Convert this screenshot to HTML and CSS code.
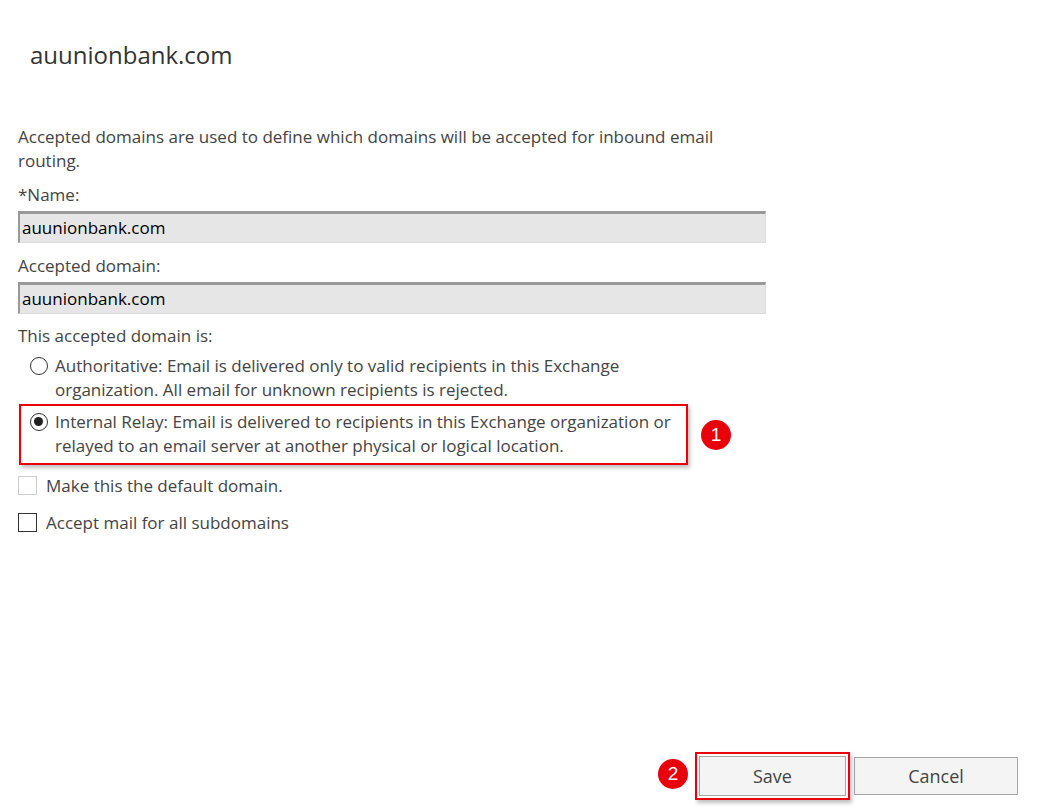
FILE: index.html
```html
<!DOCTYPE html>
<html>
<head>
<meta charset="utf-8">
<link rel="stylesheet" href="styles.css">
</head>
<body>
<div class="page">
  <h1 class="title">auunionbank.com</h1>
  <p class="desc">Accepted domains are used to define which domains will be accepted for inbound email routing.</p>
  <label class="field-label">*Name:</label>
  <div class="input">auunionbank.com</div>
  <label class="field-label">Accepted domain:</label>
  <div class="input">auunionbank.com</div>
  <label class="field-label group-label">This accepted domain is:</label>
  <div class="radio-row">
    <span class="radio"></span>
    <span class="radio-text">Authoritative: Email is delivered only to valid recipients in this Exchange organization. All email for unknown recipients is rejected.</span>
  </div>
  <div class="highlight-wrap">
    <div class="radio-row highlight">
      <span class="radio checked"></span>
      <span class="radio-text">Internal Relay: Email is delivered to recipients in this Exchange organization or relayed to an email server at another physical or logical location.</span>
    </div>
    <span class="badge badge-1">1</span>
  </div>
  <div class="check-row disabled">
    <span class="checkbox"></span>
    <span class="check-text">Make this the default domain.</span>
  </div>
  <div class="check-row">
    <span class="checkbox"></span>
    <span class="check-text">Accept mail for all subdomains</span>
  </div>
  <div class="footer">
    <div class="save-wrap">
      <span class="badge badge-2">2</span>
      <div class="save-box"><button class="btn">Save</button></div>
    </div>
    <button class="btn cancel">Cancel</button>
  </div>
</div>
</body>
</html>
```

FILE: styles.css
```css
html, body {
  margin: 0;
  padding: 0;
  background: #fff;
}
body {
  font-family: "Segoe UI", "Open Sans", "Noto Sans", sans-serif;
  color: #444;
}
.page {
  height: 812px;
  box-sizing: border-box;
  padding: 0 0 0 18px;
  display: flex;
  flex-direction: column;
  width: 1047px;
}
.title {
  margin: 39px 0 0 12px;
  font-size: 24px;
  font-weight: 400;
  line-height: 32px;
  color: #333;
}
.desc {
  width: 720px;
  margin: 54px 0 0 0;
  font-size: 17px;
  line-height: 24px;
}
.field-label {
  display: block;
  font-size: 17px;
  line-height: 24px;
  margin-top: 11px;
}
.desc + .field-label {
  margin-top: 10px;
}
.field-label.group-label {
  margin-top: 10px;
}
.input {
  width: 748px;
  height: 32px;
  box-sizing: border-box;
  margin-top: 4px;
  background: #e6e6e6;
  border-top: 3px solid #999;
  border-left: 2px solid #999;
  border-right: 1px solid #ddd;
  border-bottom: 1px solid #ddd;
  color: #000;
  font-size: 17px;
  line-height: 27px;
  padding-left: 2px;
}
.radio-row {
  display: flex;
  align-items: flex-start;
  padding-left: 12px;
  margin-top: 6px;
}
.radio {
  flex: none;
  width: 18px;
  height: 18px;
  box-sizing: border-box;
  border: 1.5px solid #333;
  border-radius: 50%;
  margin-top: 3px;
  margin-right: 7px;
  position: relative;
  background: #fff;
}
.radio.checked::after {
  content: "";
  position: absolute;
  left: 3px;
  top: 3px;
  width: 9px;
  height: 9px;
  border-radius: 50%;
  background: #222;
}
.radio-text {
  width: 625px;
  font-size: 17px;
  line-height: 24px;
}
.highlight-wrap {
  position: relative;
  margin-top: 2px;
  width: 670px;
}
.highlight-wrap .radio-row {
  margin: 0 0 0 1px;
  width: 669px;
  box-sizing: border-box;
  border: 2px solid #e8000b;
  padding: 4px 0 5px 9px;
  box-shadow: 2px 3px 4px rgba(0,0,0,0.25);
}
.badge {
  position: absolute;
  width: 30px;
  height: 30px;
  border-radius: 50%;
  background: #e8000b;
  color: #fff;
  font-family: "Liberation Sans", Arial, sans-serif;
  font-size: 19px;
  line-height: 30px;
  text-align: center;
}
.badge-1 {
  left: 683px;
  top: 16px;
}
.check-row {
  display: flex;
  align-items: center;
  margin-top: 11px;
  height: 19px;
}
.check-row + .check-row {
  margin-top: 18px;
}
.checkbox {
  width: 19px;
  height: 19px;
  box-sizing: border-box;
  border: 1.5px solid #333;
  margin-right: 9px;
  background: #fff;
}
.check-row.disabled .checkbox {
  border-color: #ccc;
}
.check-text {
  font-size: 17px;
  line-height: 24px;
}
.footer {
  margin-top: auto;
  margin-bottom: 12px;
  display: flex;
  justify-content: flex-end;
  align-items: center;
  padding-right: 29px;
}
.save-wrap {
  position: relative;
}
.save-box {
  border: 2px solid #e8000b;
  padding: 2px;
  box-shadow: 2px 3px 4px rgba(0,0,0,0.25);
}
.badge-2 {
  left: -37px;
  top: 7px;
}
.btn {
  display: block;
  width: 147px;
  height: 40px;
  box-sizing: border-box;
  background: #f4f4f4;
  border: 1px solid #a6a6a6;
  font-family: "Segoe UI", "Open Sans", "Noto Sans", sans-serif;
  font-size: 18px;
  color: #444;
  padding: 0;
  margin: 0;
}
.btn.cancel {
  width: 164px;
  height: 38px;
  margin-left: 4px;
}
```
